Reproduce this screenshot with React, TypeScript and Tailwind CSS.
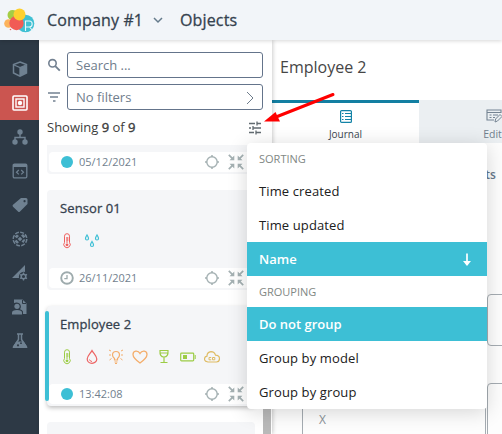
import React from "react";

type IconProps = { children: React.ReactNode; w: number; h: number; color?: string; className?: string };

function Icon({ children, w, h, color = "currentColor", className = "" }: IconProps) {
  return (
    <svg width={w} height={h} viewBox={`0 0 ${w} ${h}`} fill="none" stroke={color} className={`shrink-0 ${className}`}>
      {children}
    </svg>
  );
}

function Logo() {
  return (
    <svg width="31" height="26" viewBox="0 0 31 26" className="shrink-0">
      <circle cx="8.500" cy="8" r="5" fill="#a4cd45" />
      <circle cx="4.500" cy="16.500" r="4.300" fill="#fcb35c" />
      <circle cx="21.500" cy="16.500" r="8.800" fill="#3fc0d3" />
      <circle cx="12.500" cy="16" r="7.200" fill="#f15b55" />
      <circle cx="15.500" cy="7.500" r="6" fill="#fdd02f" />
      <path d="M21.500 24V14h3.700a3 3 0 0 1 0 6h-3.700m4 0 4 4.500" fill="none" stroke="#e8f7fb" strokeWidth="1.100" />
      <circle cx="6.500" cy="22.500" r=".8" fill="#f15b55" />
    </svg>
  );
}

const navIcons: React.ReactNode[] = [
  <Icon w={16} h={16}>
    <path d="M8 1 14.500 3.500v8.500L8 15.200 1.500 12V3.500z" strokeWidth="1.500" />
    <path d="M8 6.500 14.500 4V12L8 15z" fill="currentColor" stroke="none" />
    <path d="M2 4l6 2.500L14 4M8 6.500V15" strokeWidth="1.300" />
  </Icon>,
  <Icon w={16} h={16}>
    <rect x="1" y="1" width="14" height="14" rx="1" strokeWidth="1.600" />
    <rect x="4" y="4" width="8" height="8" strokeWidth="1.400" />
    <circle cx="8" cy="8" r="2.200" fill="currentColor" stroke="none" />
  </Icon>,
  <Icon w={16} h={16}>
    <g fill="currentColor" stroke="none">
      <circle cx="8" cy="3" r="2.700" />
      <circle cx="3" cy="13" r="2.700" />
      <circle cx="13" cy="13" r="2.700" />
    </g>
    <path d="M8 4v4.500M3 12V8.500h10V12" strokeWidth="1.400" />
  </Icon>,
  <Icon w={16} h={16}>
    <rect x="1.200" y="1.200" width="13.600" height="13.600" rx="1.200" strokeWidth="1.300" />
    <path d="M1 2.500h14" strokeWidth="3" />
    <path d="M6.800 7 4.500 9.200l2.300 2.200M9.200 7l2.300 2.200-2.300 2.200" strokeWidth="1.200" />
  </Icon>,
  <Icon w={16} h={16}>
    <path fillRule="evenodd" d="M9 1h5q1.500 0 1.500 1.500V7L8 14.500Q7 15.500 6 14.500L1 9.700Q0 8.700 1 7.700zM12.500 3a1.100 1.100 0 1 0 .1 0" fill="currentColor" stroke="none" />
  </Icon>,
  <Icon w={16} h={16}>
    <circle cx="8" cy="8" r="6.800" strokeWidth="1.500" strokeDasharray="4 1.340" />
    <g fill="currentColor" stroke="none">
      <path d="M5.700 8 8 5.700 10.300 8 8 10.300z" />
      <path d="M2.500 5.500 5 3.500 7 5 4.800 7.200zM9 4.500 11 3l2.500 2.500-2 1.700zM13.500 8.500l-2 3.500-2-1.500 2.200-2.200zM7 11.200 5 12.800 2.500 10.200l2-1.500z" />
    </g>
  </Icon>,
  <Icon w={16} h={16}>
    <path d="M0 13 13 0v7a5 5 0 0 0-6 6z" fill="currentColor" stroke="none" />
    <circle cx="11.500" cy="11.500" r="2.300" strokeWidth="1.500" />
    <path d="M11.500 7.500v1.500m0 5v1.500M8 9.500l1.300.8m4.400 2.500 1.300.8M8 13.500l1.300-.8m4.400-2.500 1.300-.8" strokeWidth="1.300" />
  </Icon>,
  <Icon w={16} h={16}>
    <path d="M2 4V.500h8.500l4 4V15H11v-2.500Q10 10.800 8 10.300 10 7 7.500 4.500 5 2.800 2 4" fill="currentColor" stroke="none" />
    <circle cx="5" cy="7.300" r="2.600" fill="currentColor" stroke="none" />
    <path d="M0 15.500v-2Q0 11 5 11t5 2.500v2z" fill="currentColor" stroke="none" />
    <path d="M10.500 1v3.500H14" stroke="#2d3945" />
  </Icon>,
  <Icon w={16} h={16}>
    <path d="M5 1h6M6.500 1v5.500L1.500 14h13l-5-7.500V1" strokeWidth="1.500" strokeLinejoin="round" />
    <path d="M4.500 9h7l3.500 5.500H1z" fill="currentColor" />
    <circle cx="6" cy="12.300" r="1.100" fill="#2d3945" stroke="none" />
    <circle cx="9" cy="10.200" r=".9" fill="#2d3945" stroke="none" />
  </Icon>,
];

function Sidebar() {
  return (
    <nav className="w-[39px] shrink-0 bg-[#2d3945] pt-3">
      {navIcons.map((icon, i) => (
        <div key={i} className={`flex h-[34px] items-center justify-center ${i === 1 ? "bg-[#cb5550] text-white" : "text-[#6f8191]"}`}>
          {icon}
        </div>
      ))}
    </nav>
  );
}

function TargetIcon() {
  return (
    <Icon w={14} h={14} color="#a5b1b3">
      <circle cx="7" cy="7" r="5.200" strokeWidth="1.400" />
      <path d="M7 0v2M7 12v2M0 7h2M12 7h2" strokeWidth="1.500" />
    </Icon>
  );
}

function CollapseIcon() {
  return (
    <Icon w={16} h={16} color="#a5b1b3">
      <path d="M.8.8l4 4M15.200.8l-4 4M.8 15.200l4-4M15.200 15.200l-4-4" strokeWidth="1.700" />
      <path d="M6.300 1.500V6.300H1.500zM9.700 1.500V6.300h4.800zM6.300 14.500V9.700H1.500zM9.700 14.500V9.700h4.800z" fill="#a5b1b3" stroke="none" />
    </Icon>
  );
}

function Card({ title, time, clock, active, icons }: { title: string; time: string; clock?: boolean; active?: boolean; icons?: React.ReactNode }) {
  return (
    <article className={`relative flex h-[100px] shrink-0 flex-col rounded bg-[#f5f6f8] px-0.5 pb-0.5 ${active ? "shadow-[0_2px_4px_rgba(0,0,0,0.25)]" : ""}`}>
      {active && <span className="absolute -left-0.5 top-[5px] h-[90px] w-1 rounded-sm bg-[#3dbfd5]" />}
      <h3 className="pl-[11px] pt-2 text-[13px] leading-5 tracking-[0.1px] text-[#35424f] [-webkit-text-stroke:0.3px]">{title}</h3>
      <div className="mt-[15px] flex h-4 items-center gap-2 pl-[10px]">{icons}</div>
      <footer className="mt-auto flex h-5 items-center rounded bg-white pl-[11px] pr-[9px] text-[11px] text-[#717f8e]">
        {clock ? (
          <Icon w={14} h={14} color="#9eabad">
            <circle cx="7" cy="7" r="5.800" strokeWidth="1.900" />
            <path d="M7 4v3.600H4.300" strokeWidth="1.300" />
          </Icon>
        ) : (
          <span className="mx-px h-3 w-3 rounded-full bg-[#3dbfd5]" />
        )}
        <span className="ml-[5px]">{time}</span>
        <span className="ml-auto flex items-center gap-[9px]">
          <TargetIcon />
          <CollapseIcon />
        </span>
      </footer>
    </article>
  );
}

function Thermometer({ color }: { color: string }) {
  return (
    <Icon w={16} h={16} color={color}>
      <path d="M5.500 9.500V3.200a2.500 2.500 0 0 1 5 0v6.300a3.200 3.200 0 1 1-5 0z" />
      <path d="M8 4v6M7.500 5h2M7.500 7h2" />
      <circle cx="8" cy="11.800" r="1.400" fill={color} stroke="none" />
    </Icon>
  );
}

const drop = "M0-3C-.8-1.500-1.500-.8-1.500.5a1.500 1.500 0 0 0 3 0C1.500-.8.8-1.500 0-3z";

const sensorIcons = (
  <>
    <Thermometer color="#ef605f" />
    <Icon w={16} h={16} color="#3dbfd5" className="ml-px">
      <g strokeWidth="1.200">
        <path d={drop} transform="translate(3 5)" />
        <path d={drop} transform="translate(13 5)" />
        <path d={drop} transform="translate(8 11.500)" />
      </g>
    </Icon>
  </>
);

const employeeIcons = (
  <>
    <Thermometer color="#9ccc45" />
    <Icon w={16} h={16} color="#ed6363" className="ml-px">
      <path d="M8 1.500C6.500 4.500 3.200 7 3.200 10a4.800 4.300 0 0 0 9.600 0C12.800 7 9.500 4.500 8 1.500z" strokeWidth="1.200" />
      <path d="M5.500 10.500Q6 12.500 8 12.500" />
    </Icon>
    <Icon w={16} h={16} color="#f4ad6b">
      <path d="M6.500 11V9.500Q4.500 8 4.500 6a3.500 3.500 0 0 1 7 0q0 2-2 3.500V11zM6.500 13h3M7 14.500h2" strokeWidth="1.200" />
      <path d="M3 2 1 1m12 1 2-1M3 6H1m12 0h2M3.500 9.500 1.500 11m11-1.500 2 1.500" />
    </Icon>
    <Icon w={16} h={16} color="#f4ad6b">
      <path d="M8 14Q1 9 1 5.500C1 1.500 6 1 8 4.500 10 1 15 1.500 15 5.500Q15 9 8 14z" strokeWidth="1.300" />
    </Icon>
    <Icon w={16} h={16} color="#9ccc45">
      <path d="M4 1.500h8Q12.500 8 8 8T4 1.500zM4 4h8M8 8v5.500M4.500 13.500h7" strokeWidth="1.200" />
    </Icon>
    <Icon w={16} h={16} color="#9ccc45">
      <rect x=".7" y="4.200" width="13" height="7.600" rx=".8" strokeWidth="1.200" />
      <path d="M15.200 6v4" />
      <path d="M3 6h4v4H3z" fill="#9ccc45" stroke="none" />
    </Icon>
    <Icon w={16} h={16} color="#dfbc64">
      <path d="M4 13Q.5 12.500.5 10 .5 7.500 3 7.200q0-4 4-4.500 3.500 0 4.500 3.500 4 .2 4 3.600 0 3-3 3.200z" strokeWidth="1.200" />
      <path d="M7.200 8.500H5v2.300h2.200M8.500 8.500v2.300h2.300V8.500z" />
    </Icon>
  </>
);

function ObjectList() {
  return (
    <section className="relative z-10 flex w-[233px] shrink-0 flex-col bg-white shadow-[1px_0_4px_rgba(0,0,0,0.2)]">
      <div className="flex flex-col gap-1.5 pl-2 pr-[9px] pt-3 text-[13px] text-[#6f7d8c]">
        <div className="flex items-center gap-[6px]">
          <Icon w={14} h={14} color="#738191">
            <circle cx="5.500" cy="5.300" r="3.700" strokeWidth="1.600" />
            <path d="m8.300 8.200 4.500 4.500" strokeWidth="1.900" />
          </Icon>
          <div className="flex h-[26px] flex-1 items-center rounded-[3px] border border-[#64748b] px-2 pt-px">Search ...</div>
        </div>
        <div className="flex items-center gap-[6px]">
          <Icon w={14} h={14} color="#738191">
            <path d="M1 3h12M3 7h8M6 11h2.500" strokeWidth="1.500" />
          </Icon>
          <div className="flex h-[26px] flex-1 items-center justify-between rounded-[3px] border border-[#64748b] px-2 pt-px">
            No filters
            <Icon w={8} h={14}>
              <path d="m1 1 6 6-6 6" />
            </Icon>
          </div>
        </div>
      </div>
      <div className="flex h-[35px] items-center justify-between pl-2 pr-[10px] text-[13px] text-[#3d3d3d]">
        <span>
          Showing <b className="font-normal [-webkit-text-stroke:0.4px]">9</b> of <b className="font-normal [-webkit-text-stroke:0.4px]">9</b>
        </span>
        <Icon w={14} h={14} color="#626b71">
          <path d="M1 2.500h6m2 0h4M9 .5v4M1 7h2m2.500 0H13M5 5v4M1 11.500h5m2 0h5M8 9.500v4" strokeWidth="1.300" />
        </Icon>
      </div>
      <div className="flex min-h-0 flex-1 overflow-hidden">
        <div className="-mt-[71px] flex w-[216px] flex-col gap-4 pl-2 [clip-path:inset(71px_-8px_0_0)]">
          <Card title="" time="05/12/2021" />
          <Card title="Sensor 01" time="26/11/2021" clock icons={sensorIcons} />
          <Card title="Employee 2" time="13:42:08" active icons={employeeIcons} />
          <Card title="" time="" />
        </div>
        <div className="ml-2 flex w-2 flex-col justify-end">
          <div className="h-24 bg-[#b9b9b9]" />
        </div>
      </div>
    </section>
  );
}

function ObjectDetails() {
  return (
    <main className="flex min-w-0 flex-1 flex-col overflow-hidden bg-white">
      <h1 className="flex h-[60px] shrink-0 items-center pl-2 pb-1.5 text-[16px] text-[#464646]">Employee 2</h1>
      <div className="flex h-[43px] shrink-0 text-[10px] leading-3">
        <div className="flex w-[147px] shrink-0 flex-col items-center border-t-[3px] border-[#137fa2] pt-[7px] text-[#3b4650]">
          <Icon w={12} h={13} color="#1383a7">
            <rect x=".6" y=".6" width="10.800" height="11.800" rx="1" strokeWidth="1.200" />
            <path d="M2 3.500h1.500m1.500 0h6M2 6.500h1.500m1.500 0h6M2 9.500h1.500m1.500 0h6" strokeWidth="1" />
          </Icon>
          <span className="mt-[5px]">Journal</span>
        </div>
        <div className="flex w-[147px] shrink-0 flex-col items-center bg-[#ebeff2] pt-[9px] text-[#71808e]">
          <Icon w={17} h={15} color="#758493" className="ml-1">
            <path d="M8 11H1V1h14v3M1 3.500h14M3.500 6h2m1.500 0h5M3.500 8.500h2m1.500 0h2" strokeWidth="1.100" />
            <path d="m9 13 .6-3L14 5.500l2 2L11.500 12z" />
          </Icon>
          <span className="mt-1 text-[10.500px]">Edit</span>
        </div>
      </div>
      <div className="flex h-[151px] shrink-0 items-start bg-[#fdfdfd] pl-[180px] pt-[23px] text-[12px] font-semibold text-[#66788a]">Objects</div>
      <div className="grid flex-1 grid-cols-[184px_184px] grid-rows-[52px_120px] gap-x-px gap-y-[37px] bg-[#fdfdfd] pl-[30px]">
        <div className="rounded border border-[#a5acb2]" />
        <div className="rounded border border-[#a5acb2]" />
        <div className="rounded border border-[#a5acb2] pl-4 pt-[27px] text-[12px] text-[#8b9298]">X</div>
        <div className="rounded border border-[#a5acb2]" />
      </div>
    </main>
  );
}

function MenuItem({ label, selected, arrow }: { label: string; selected?: boolean; arrow?: boolean }) {
  return (
    <li className={`flex h-[34px] items-center justify-between px-3 pt-px text-[13px] ${selected ? "bg-[#3dbfd5] font-semibold text-white" : "tracking-[0.12px] text-[#202020]"}`}>
      {label}
      {arrow && (
        <Icon w={16} h={16}>
          <path d="M8 1.500v11" strokeWidth="1.700" />
          <path d="M4 9h8l-4 5z" fill="currentColor" stroke="none" />
        </Icon>
      )}
    </li>
  );
}

function SortMenu() {
  return (
    <ul className="absolute left-[247px] top-[143px] z-20 w-60 rounded bg-white shadow-[0_3px_20px_rgba(0,0,0,0.16)]">
      <li className="flex h-[31px] items-center px-3 pt-px text-[11px] text-[#818784]">SORTING</li>
      <MenuItem label="Time created" />
      <MenuItem label="Time updated" />
      <MenuItem label="Name" selected arrow />
      <li className="flex h-[31px] items-center px-3 pt-px text-[11px] text-[#818784]">GROUPING</li>
      <MenuItem label="Do not group" selected />
      <MenuItem label="Group by model" />
      <MenuItem label="Group by group" />
    </ul>
  );
}

export default function App() {
  return (
    <div className="relative flex h-[434px] w-[502px] flex-col overflow-hidden bg-white font-['Open_Sans','Noto_Sans',sans-serif]">
      <header className="relative z-20 flex h-10 shrink-0 items-center bg-[#f2f5f9] pl-1 text-[16px] tracking-[0.15px] text-[#35424f] shadow-[0_1px_4px_rgba(0,0,0,0.16)] [-webkit-text-stroke:0.3px]">
        <Logo />
        <span className="ml-3 w-[96px] whitespace-nowrap">Company #1</span>
        <Icon w={10} h={7} color="#657b8c" className="ml-[10px]">
          <path d="m1 1 4 4 4-4" strokeWidth="1.500" />
        </Icon>
        <span className="ml-[17px]">Objects</span>
      </header>
      <div className="flex min-h-0 flex-1">
        <Sidebar />
        <ObjectList />
        <ObjectDetails />
      </div>
      <SortMenu />
      <svg className="absolute left-[264px] top-[92px] z-30" width="72" height="32" viewBox="0 0 72 32">
        <path d="M69 2.500 12 25" stroke="#ff0000" strokeWidth="3" strokeLinecap="round" />
        <path d="M0 29.500 11.500 20l4.500 9.500z" fill="#ff0000" />
      </svg>
    </div>
  );
}
